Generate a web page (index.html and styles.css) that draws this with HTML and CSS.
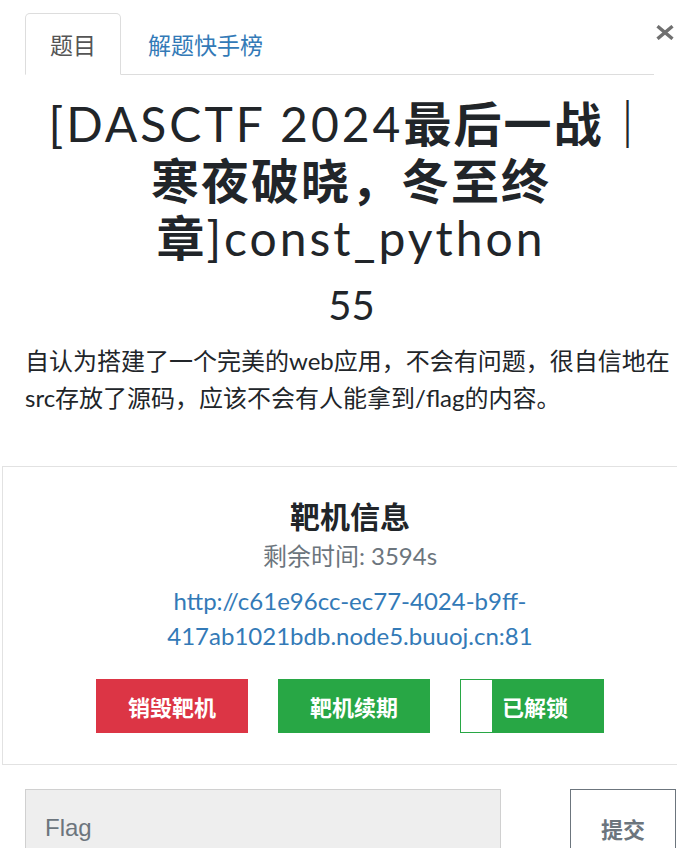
FILE: index.html
```html
<!DOCTYPE html>
<html lang="zh-CN">
<head>
<meta charset="utf-8">
<title>const_python</title>
<link rel="stylesheet" href="styles.css">
</head>
<body>
<div class="page">
  <div class="header">
    <ul class="tabs">
      <li class="tab active">题目</li>
      <li class="tab"><a class="tab-link" href="#">解题快手榜</a></li>
    </ul>
    <button class="close" type="button" aria-label="关闭">
      <svg width="18" height="15" viewBox="0 0 18 15"><path d="M1.5 1.2 L16.5 13.8 M16.5 1.2 L1.5 13.8" stroke="#707070" stroke-width="3.4" stroke-linecap="butt" fill="none"/></svg>
    </button>
  </div>

  <div class="content">
    <h1 class="title"><span class="lat">[DASCTF 2024</span>最后一战｜寒夜破晓，冬至终章<span class="lat">]const_python</span></h1>
    <div class="points">55</div>
    <p class="desc">自认为搭建了一个完美的web应用，不会有问题，很自信地在src存放了源码，应该不会有人能拿到/flag的内容。</p>
  </div>

  <div class="box">
    <h3 class="box-title">靶机信息</h3>
    <div class="remain">剩余时间: 3594s</div>
    <a class="target" href="#">http://c61e96cc-ec77-4024-b9ff-417ab1021bdb.node5.buuoj.cn:81</a>
    <div class="actions">
      <button class="btn btn-red" type="button">销毁靶机</button>
      <button class="btn btn-green" type="button">靶机续期</button>
      <button class="btn btn-unlock" type="button"><span class="knob"></span><span class="lbl">已解锁</span></button>
    </div>
  </div>

  <form class="flag-row">
    <input class="flag-input" type="text" placeholder="Flag">
    <button class="submit" type="button">提交</button>
  </form>
</div>
</body>
</html>
```

FILE: styles.css
```css
html, body {
  margin: 0;
  padding: 0;
  overflow: hidden;
  background: #fff;
}
body {
  font-family: "Lato", "Noto Sans CJK SC", sans-serif;
  color: #212529;
}
.page {
  width: 702px;
}
.header {
  display: flex;
  align-items: flex-start;
  padding: 13px 28px 0 25px;
}
.tabs {
  flex: 1;
  display: flex;
  list-style: none;
  margin: 0;
  padding: 0;
  border-bottom: 1px solid #dddddd;
}
.tab {
  font-family: "Noto Sans CJK SC", sans-serif;
  font-size: 23px;
  line-height: 36px;
  padding: 12px 24px;
  margin-right: 2px;
  margin-bottom: -1px;
  border: 1px solid transparent;
  border-radius: 5px 5px 0 0;
  color: #555;
}
.tab.active {
  border-color: #dddddd #dddddd transparent;
  background: #fff;
}
.tab-link {
  color: #337ab7;
  text-decoration: none;
}
.close {
  margin: 12px 0 0 2px;
  padding: 0;
  border: 0;
  background: none;
  width: 18px;
  height: 15px;
  display: flex;
}
.content {
  padding: 0 25px;
}
.title {
  margin: 20px 0 0;
  font-size: 48px;
  line-height: 57px;
  font-weight: 700;
  letter-spacing: 2px;
  text-align: center;
  color: #212529;
}
.title .lat {
  font-family: "Lato", sans-serif;
  font-weight: 400;
  letter-spacing: 3px;
}
.points {
  margin-top: 15px;
  font-size: 40px;
  line-height: 48px;
  font-weight: 400;
  text-align: center;
  padding-left: 1px;
}
.desc {
  margin: 13px 0 0;
  font-size: 24px;
  line-height: 37px;
}
.box {
  margin: 50px 0 0 2px;
  width: 698px;
  box-sizing: border-box;
  border: 1px solid #e2e2e2;
  text-align: center;
  padding: 31px 21px 31px 19px;
}
.box-title {
  margin: 0;
  font-size: 30px;
  line-height: 36px;
  font-weight: 700;
  color: #212529;
}
.remain {
  margin-top: 4px;
  font-size: 24px;
  line-height: 36px;
  color: #6c757d;
}
.target {
  display: block;
  margin: 9px auto 0;
  width: 560px;
  font-size: 24px;
  line-height: 35px;
  color: #337ab7;
  text-decoration: none;
}
.actions {
  display: flex;
  justify-content: center;
  gap: 30px;
  margin-top: 26px;
}
.btn {
  height: 54px;
  width: 152px;
  border: 1px solid transparent;
  border-radius: 0;
  font-family: "Noto Sans CJK SC", sans-serif;
  font-size: 22px;
  font-weight: 700;
  color: #fff;
  padding: 0;
  display: flex;
  align-items: center;
  justify-content: center;
}
.btn-red {
  background: #dc3545;
  border-color: #dc3545;
}
.btn-green {
  background: #28a745;
  border-color: #28a745;
}
.btn-unlock {
  width: 144px;
  background: #28a745;
  border-color: #28a745;
  justify-content: flex-start;
  align-items: stretch;
}
.knob {
  width: 31px;
  background: #fff;
}
.lbl {
  display: flex;
  align-items: center;
  padding-left: 10px;
}
.flag-row {
  display: flex;
  margin: 24px 0 0;
  padding-left: 25px;
}
.flag-input {
  width: 476px;
  height: 78px;
  box-sizing: border-box;
  margin: 0;
  border: 1px solid #d0d0d0;
  border-radius: 0;
  background: #eeeeee;
  padding: 0 19px;
  font-family: "Liberation Sans", Arial, sans-serif;
  font-size: 24px;
  color: #495057;
}
.flag-input::placeholder {
  color: #6c757d;
  opacity: 1;
}
.submit {
  margin-left: 69px;
  width: 106px;
  height: 78px;
  box-sizing: border-box;
  border: 1px solid #6c757d;
  border-radius: 0;
  background: #fff;
  color: #6c757d;
  font-family: "Noto Sans CJK SC", sans-serif;
  font-size: 22px;
  font-weight: 700;
  padding: 0;
}
```
